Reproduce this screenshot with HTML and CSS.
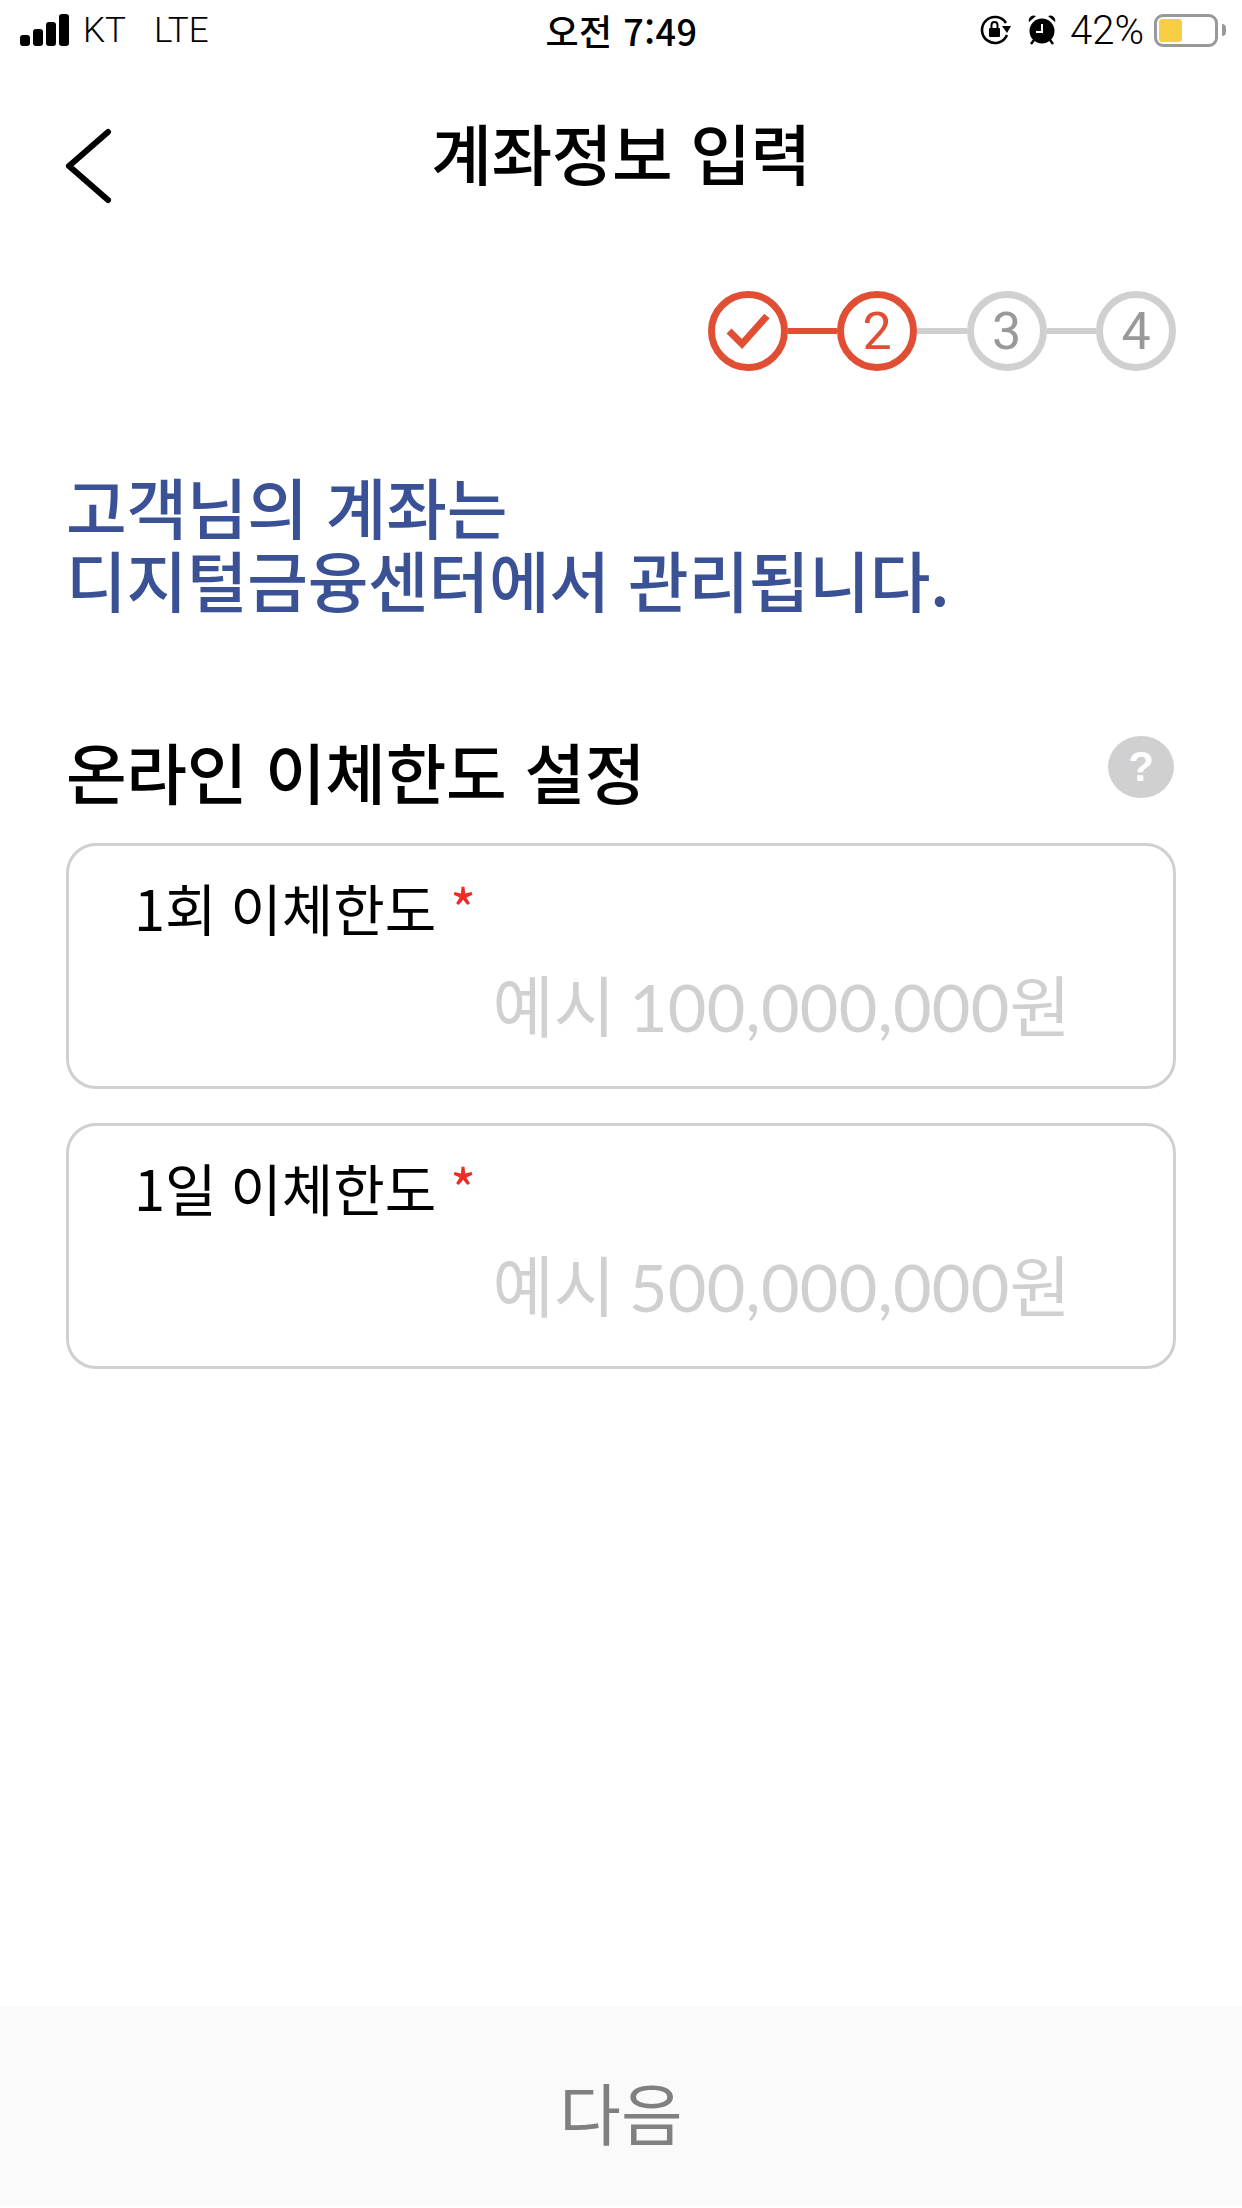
FILE: index.html
```html
<!DOCTYPE html>
<html lang="ko">
<head>
    <meta charset="UTF-8">
    <meta name="viewport" content="width=device-width, initial-scale=1.0">
    <title>계좌정보 입력</title>
    <link rel="stylesheet" href="styles.css">
</head>
<body>
    <div class="status-bar">
        <div class="status-left">
            <div class="signal">
                <span class="signal-bar s1"></span>
                <span class="signal-bar s2"></span>
                <span class="signal-bar s3"></span>
                <span class="signal-bar s4"></span>
            </div>
            <span class="carrier">KT</span>
            <span class="network">LTE</span>
        </div>
        <div class="status-time">오전 7:49</div>
        <div class="status-right">
            <svg class="icon-lock" width="32" height="30" viewBox="0 0 32 30">
                <path d="M27 20 A13 13 0 1 1 26 8" fill="none" stroke="#000" stroke-width="2.6"/>
                <path d="M22 11 L31 11 L27 18 Z" fill="#000"/>
                <rect x="9" y="13" width="11" height="9" rx="1" fill="#000"/>
                <path d="M11.500 13 V10 a3 3 0 0 1 6 0 V13" fill="none" stroke="#000" stroke-width="2"/>
            </svg>
            <svg class="icon-alarm" width="28" height="30" viewBox="0 0 28 30">
                <circle cx="14" cy="16" r="12.500" fill="#000"/>
                <path d="M1 7 a5 5 0 0 1 7 -6 Z M27 7 a5 5 0 0 0 -7 -6 Z" fill="#000"/>
                <path d="M6 25 L3 29 M22 25 L25 29" stroke="#000" stroke-width="2.500"/>
                <path d="M14 9 V17 H8" fill="none" stroke="#fff" stroke-width="2"/>
            </svg>
            <span class="battery-text">42%</span>
            <div class="battery">
                <div class="battery-body"><div class="battery-level"></div></div>
                <div class="battery-nub"></div>
            </div>
        </div>
    </div>

    <header class="top-bar">
        <svg class="back" width="48" height="80" viewBox="0 0 48 80">
            <path d="M44 4 L5 38 L44 72" fill="none" stroke="#000" stroke-width="6" stroke-linecap="round" stroke-linejoin="round"/>
        </svg>
        <h1 class="title">계좌정보 입력</h1>
    </header>

    <main class="content">
        <div class="steps">
            <div class="step done">
                <svg width="46" height="40" viewBox="0 0 46 40">
                    <path d="M4 20 L17 33 L42 5" fill="none" stroke="#e04e33" stroke-width="7"/>
                </svg>
            </div>
            <div class="step-line done"></div>
            <div class="step done">2</div>
            <div class="step-line"></div>
            <div class="step">3</div>
            <div class="step-line"></div>
            <div class="step">4</div>
        </div>

        <p class="notice">고객님의 계좌는<br>디지털금융센터에서 관리됩니다.</p>

        <div class="section-head">
            <h2 class="section-title">온라인 이체한도 설정</h2>
            <div class="help">?</div>
        </div>

        <div class="field">
            <div class="field-label">1회 이체한도 <span class="required">*</span></div>
            <div class="field-value">예시 100,000,000원</div>
        </div>
        <div class="field">
            <div class="field-label">1일 이체한도 <span class="required">*</span></div>
            <div class="field-value">예시 500,000,000원</div>
        </div>
    </main>

    <footer class="next-bar">다음</footer>
</body>
</html>
```

FILE: styles.css
```css
html, body {
    margin: 0;
    padding: 0;
}
body {
    width: 1242px;
    height: 2208px;
    display: flex;
    flex-direction: column;
    background-color: #fff;
    color: #000;
    font-family: "Noto Sans CJK KR", "Noto Sans", sans-serif;
}
.status-bar {
    height: 60px;
    padding: 0 16px 0 20px;
    display: grid;
    grid-template-columns: 1fr auto 1fr;
    align-items: center;
}
.status-left {
    display: flex;
    align-items: center;
    font-family: Roboto, sans-serif;
    font-weight: 300;
    font-size: 35px;
}
.signal {
    display: flex;
    align-items: flex-end;
    gap: 3px;
    height: 32px;
    margin-right: 14px;
}
.signal-bar {
    width: 10px;
    background-color: #000;
    border-radius: 3px;
}
.s1 { height: 11px; }
.s2 { height: 17px; }
.s3 { height: 24px; }
.s4 { height: 32px; }
.network {
    margin-left: 28px;
}
.status-time {
    margin-right: 3px;
    font-size: 36px;
    font-weight: 500;
    letter-spacing: 0.5px;
}
.status-right {
    display: flex;
    align-items: center;
    justify-content: flex-end;
    font-family: Roboto, sans-serif;
    font-weight: 300;
    font-size: 40px;
}
.icon-alarm {
    margin-left: 16px;
}
.battery-text {
    margin-left: 14px;
}
.battery {
    display: flex;
    align-items: center;
    margin-left: 10px;
}
.battery-body {
    box-sizing: border-box;
    width: 64px;
    height: 33px;
    border: 3px solid #999;
    border-radius: 9px;
    padding: 2px;
    display: flex;
}
.battery-level {
    width: 23px;
    background-color: #f7ce46;
    border-radius: 3px;
}
.battery-nub {
    width: 4px;
    height: 12px;
    margin-left: 4px;
    background-color: #999;
    border-radius: 0 4px 4px 0;
}

.top-bar {
    position: relative;
    height: 218px;
    text-align: center;
}
.back {
    position: absolute;
    left: 64px;
    top: 68px;
}
.title {
    margin: 0;
    padding-top: 47px;
    font-size: 66px;
    line-height: 88px;
    font-weight: 500;
    letter-spacing: -0.5px;
}

.content {
    flex: 1;
    padding: 0 66px;
}
.steps {
    display: flex;
    justify-content: flex-end;
    align-items: center;
    margin-top: 13px;
}
.step {
    width: 80px;
    height: 80px;
    box-sizing: border-box;
    border: 7px solid #d0d0d0;
    border-radius: 50%;
    display: flex;
    align-items: center;
    justify-content: center;
    font-family: Roboto, sans-serif;
    font-weight: 400;
    font-size: 52px;
    color: #999;
}
.step.done {
    border-color: #e04e33;
    color: #e04e33;
}
.step-line {
    width: 49.500px;
    height: 6px;
    background-color: #d0d0d0;
}
.step-line.done {
    background-color: #e04e33;
}

.notice {
    margin: 98px 0 0;
    font-size: 66px;
    line-height: 73px;
    font-weight: 500;
    color: #3a5295;
    letter-spacing: -0.3px;
}

.section-head {
    display: flex;
    justify-content: space-between;
    align-items: center;
    margin-top: 110px;
    height: 90px;
}
.section-title {
    margin: 0;
    font-size: 66px;
    font-weight: 500;
    line-height: 90px;
    letter-spacing: -0.4px;
}
.help {
    width: 66px;
    height: 62px;
    margin: 0 2px 6px 0;
    border-radius: 50%;
    background-color: #d0d0d0;
    color: #fff;
    display: flex;
    align-items: center;
    justify-content: center;
    font-family: "Liberation Sans", sans-serif;
    font-size: 42px;
    font-weight: 700;
}

.field {
    box-sizing: border-box;
    height: 246px;
    margin-top: 34px;
    padding: 26px 102px 0 65px;
    border: 3px solid #d0d0d0;
    border-radius: 30px;
}
.section-head + .field {
    margin-top: 28px;
}
.field-label {
    font-size: 56px;
    line-height: 70px;
    word-spacing: -2px;
}
.required {
    color: #ee2b24;
}
.field-value {
    margin-top: 22px;
    text-align: right;
    font-family: Lato, "Noto Sans CJK KR", sans-serif;
    font-size: 66.500px;
    line-height: 84px;
    word-spacing: -4px;
    letter-spacing: 0.3px;
    color: #d0d0d0;
}

.next-bar {
    box-sizing: border-box;
    height: 198px;
    margin-bottom: 3px;
    padding-top: 8px;
    display: flex;
    align-items: center;
    justify-content: center;
    background-color: #fafafa;
    color: #808080;
    font-size: 67px;
}
```
